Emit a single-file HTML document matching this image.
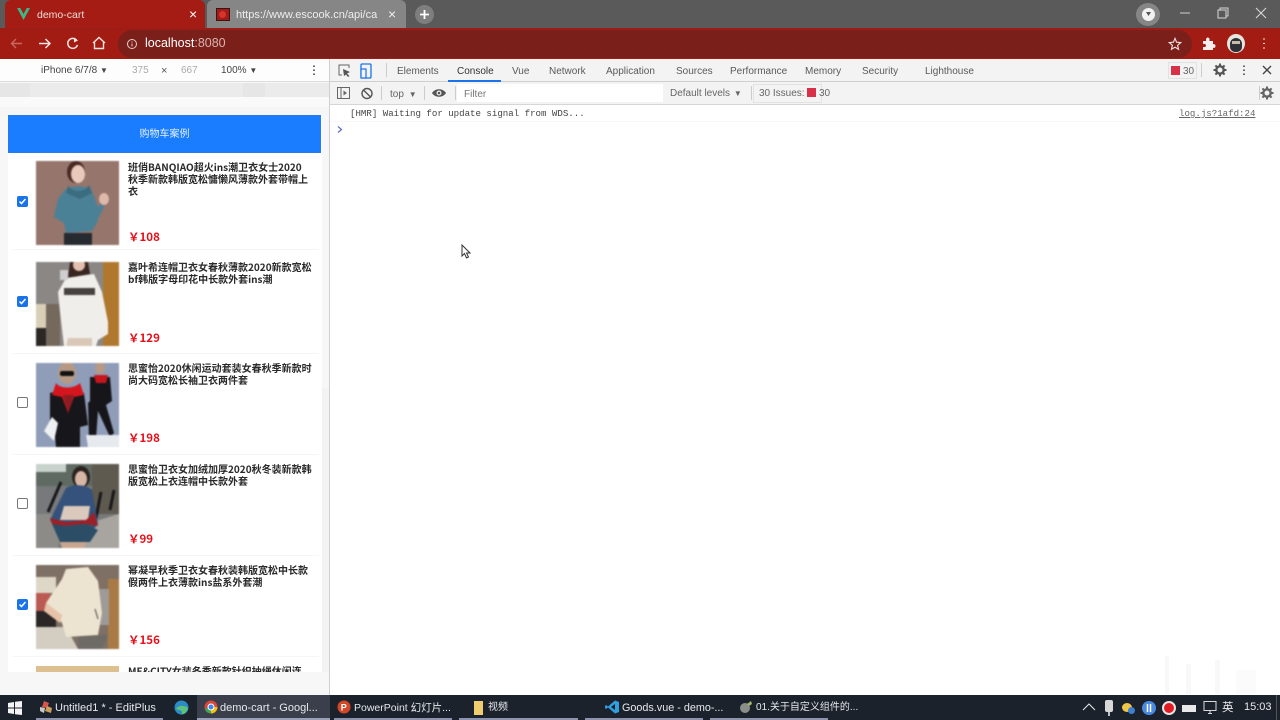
<!DOCTYPE html>
<html><head><meta charset="utf-8"><style>
*{box-sizing:border-box}
html,body{margin:0;padding:0;width:1280px;height:720px;overflow:hidden;background:#fff;font-family:"Liberation Sans","Noto Sans CJK SC",sans-serif}
.a{position:absolute}
.t{position:absolute;white-space:nowrap}
.dt{font-size:10px;color:#5a5a5a;top:65px;line-height:13px}
.title{position:absolute;left:128px;font-size:10px;line-height:12px;font-weight:700;color:#2a2a2a;font-family:"Noto Sans CJK SC","Liberation Sans",sans-serif;white-space:nowrap}
.price{position:absolute;left:128px;font-size:11.500px;line-height:13px;font-weight:700;color:#e60f18;font-family:"Noto Sans CJK SC","Liberation Sans",sans-serif}
.cb{position:absolute;left:17px;width:11px;height:11px;border-radius:2px}
.cb.on{background:#1a73e8}
.cb.off{background:#fff;border:1px solid #777}
.sep{position:absolute;left:13px;width:306px;height:1px;background:#f5f5f5}
.tb{position:absolute;top:701px;font-size:11px;line-height:14px;color:#e6e8ec;white-space:nowrap}
.ul{position:absolute;top:717.5px;height:2.5px;background:#8d93ad}
svg{position:absolute;overflow:hidden}
svg.img{filter:blur(.7px)}
</style></head><body>

<!-- title bar -->
<div class="a" style="left:0;top:0;width:1280px;height:29px;background:#5a5a5a"></div>
<div class="a" style="left:5px;top:0;width:200px;height:29px;background:#a41c13;border-radius:6px 6px 0 0"></div>
<div class="a" style="left:207px;top:0;width:199px;height:29px;background:#868686;border-radius:6px 6px 0 0"></div>
<svg style="left:17px;top:8px" width="13" height="12" viewBox="0 0 14 13"><path d="M0 0H3.500L7 6.500 10.500 0H14L7 13Z" fill="#3fb588"/></svg>
<div class="t" style="left:37px;top:8px;font-size:10.500px;line-height:14px;color:#f3dcd8">demo-cart</div>
<div class="t" style="left:189px;top:7px;font-size:14px;line-height:15px;color:#fff">×</div>
<div class="a" style="left:216px;top:8px;width:14px;height:13px;background:#a11c18;border:1px solid #3a1410"></div>
<div class="a" style="left:219px;top:11px;width:7px;height:7px;border-radius:50%;background:#d8342a"></div>
<div class="t" style="left:236px;top:8px;width:143px;overflow:hidden;font-size:11px;line-height:14px;color:#eee">https://www.escook.cn/api/ca</div>
<div class="t" style="left:388px;top:7px;font-size:14px;line-height:15px;color:#eee">×</div>
<div class="a" style="left:415px;top:5px;width:19px;height:19px;border-radius:50%;background:#7e7e7e"></div>
<svg style="left:419px;top:9px" width="11" height="11" viewBox="0 0 11 11"><path d="M5.500 1V10M1 5.500H10" stroke="#fff" stroke-width="1.800"/></svg>
<div class="a" style="left:1136px;top:3px;width:24px;height:23px;border-radius:50%;background:#868686"></div>
<div class="a" style="left:1142px;top:8px;width:13px;height:13px;border-radius:50%;background:#f2f2f2"></div>
<svg style="left:1145px;top:12px" width="7" height="5" viewBox="0 0 7 5"><path d="M1 0H6L3.500 4Z" fill="#555"/></svg>
<svg style="left:1176px;top:5px" width="100" height="18" viewBox="0 0 100 18"><path d="M4 8H14" stroke="#cfcfcf" stroke-width="1"/><path d="M42 5H50V13H42ZM44 5V3H52V11H50" fill="none" stroke="#d8d8d8" stroke-width="1"/><path d="M80 3L90 13M90 3L80 13" stroke="#dcdcdc" stroke-width="1"/></svg>

<!-- toolbar -->
<div class="a" style="left:0;top:28px;width:1280px;height:31px;background:#a21c13;border-top:2px solid #9c1d15"></div>
<div class="a" style="left:118px;top:30px;width:1074px;height:28px;background:#7a1f1a;border-radius:14px"></div>
<svg style="left:9px;top:35px" width="100" height="17" viewBox="0 0 100 17"><path d="M13 8.500H3M7 4L2.500 8.500 7 13" fill="none" stroke="#c7695f" stroke-width="1.400"/><path d="M30 8.500H41M36.500 4L41 8.500 36.500 13" fill="none" stroke="#f4e4e0" stroke-width="1.500"/><path d="M67.500 5A5 5 0 1 0 68.500 10" fill="none" stroke="#f4e4e0" stroke-width="1.500"/><path d="M65 2.500L69 5.500 65 7.500Z" fill="#f4e4e0"/><path d="M84 8L90 2.500 96 8M85.500 7V13.500H94.500V7" fill="none" stroke="#f4e4e0" stroke-width="1.400"/></svg>
<svg style="left:125px;top:37px" width="14" height="14" viewBox="0 0 14 14"><circle cx="7" cy="7" r="4.500" fill="none" stroke="#e5cdc9" stroke-width="1"/><path d="M7 4.500V5.500M7 6.500V9.500" stroke="#e5cdc9" stroke-width="1"/></svg>
<div class="t" style="left:145px;top:36px;font-size:12.500px;line-height:15px;color:#fff">localhost<span style="color:#d8b3ae">:8080</span></div>
<svg style="left:1168px;top:37px" width="14" height="14" viewBox="0 0 15 15"><path d="M7.500 1.500L9.200 5.600 13.600 6 10.300 8.900 11.300 13.200 7.500 10.900 3.700 13.200 4.700 8.900 1.400 6 5.800 5.600Z" fill="none" stroke="#efe0de" stroke-width="1.200"/></svg>
<svg style="left:1201px;top:36px" width="15" height="15" viewBox="0 0 15 15"><path d="M2 5H5.200C4.600 3 5.500 1.500 6.800 1.500S9 3 8.400 5H12V8.200C13.800 7.700 14.500 8.700 14.500 10S13.800 12.300 12 11.800V14H2V11C4 11.500 5 10.800 5 9.500S4 7.500 2 8Z" fill="#f6eeee"/></svg>
<div class="a" style="left:1227px;top:34px;width:18px;height:19px;border-radius:50%;background:#e6e6e0"></div>
<div class="a" style="left:1230px;top:38px;width:12px;height:14px;border-radius:6px 6px 5px 5px;background:#2f3035"></div>
<div class="a" style="left:1232px;top:41px;width:8px;height:3px;background:#c9b9a9"></div>
<svg style="left:1262px;top:36px" width="4" height="15" viewBox="0 0 4 15"><path d="M2 2.500V3.500M2 7V8M2 11.500V12.500" stroke="#f0e0dd" stroke-width="2"/></svg>

<!-- left pane -->
<div class="a" style="left:0;top:59px;width:330px;height:636px;background:#f7f7f7"></div>
<div class="a" style="left:0;top:59px;width:330px;height:23px;background:#fdfdfd;border-bottom:1px solid #dcdcdc"></div>
<div class="t" style="left:41px;top:64px;font-size:10px;line-height:13px;color:#444">iPhone 6/7/8 <span style="font-size:8px">▼</span></div>
<div class="t" style="left:132px;top:64px;font-size:10px;line-height:13px;color:#aaa">375</div>
<div class="t" style="left:161px;top:65px;font-size:11px;line-height:13px;color:#555">×</div>
<div class="t" style="left:181px;top:64px;font-size:10px;line-height:13px;color:#aaa">667</div>
<div class="t" style="left:221px;top:64px;font-size:10px;line-height:13px;color:#444">100% <span style="font-size:8px">▼</span></div>
<svg style="left:312px;top:64px" width="4" height="13" viewBox="0 0 4 13"><path d="M2 1.500V3M2 5.500V7M2 9.500V11" stroke="#555" stroke-width="1.800"/></svg>
<div class="a" style="left:0;top:83px;width:330px;height:14px;background:#ebebeb"></div>
<div class="a" style="left:0;top:83px;width:30px;height:14px;background:#e6e6e6"></div>
<div class="a" style="left:243px;top:83px;width:22px;height:14px;background:#e6e6e6"></div>
<div class="a" style="left:0;top:97px;width:330px;height:10px;background:#fafafa"></div>

<!-- card -->
<div class="a" style="left:8px;top:107px;width:314px;height:565px;background:#fff"></div>
<div class="a" style="left:0;top:107px;width:330px;height:9px;background:#f6f6f7"></div>
<div class="a" style="left:8px;top:115px;width:313px;height:38px;background:#1a7dff;border:1px solid #2a7ae8"></div>
<div class="t" style="left:8px;width:313px;text-align:center;top:127px;font-size:10px;line-height:15px;color:#e6f0ff">购物车案例</div>
<div class="a" style="left:322px;top:116px;width:8px;height:556px;background:#f3f3f3"></div>
<div class="a" style="left:322px;top:116px;width:8px;height:272px;background:#f7f7f7"></div>

<!-- Item 1 -->
<div class="cb on" style="top:196px"></div>
<svg style="left:17px;top:196px" width="11" height="11" viewBox="0 0 11 11"><path d="M2.500 5.500L4.500 7.500 8.500 3" fill="none" stroke="#fff" stroke-width="1.500"/></svg>
<svg class="img" style="left:36px;top:161px" width="83" height="84" viewBox="0 0 83 84"><rect width="83" height="84" fill="#95756c"/><ellipse cx="40" cy="11" rx="9" ry="11" fill="#4a2a24"/><ellipse cx="42" cy="13" rx="7" ry="9" fill="#e9c9bb"/><path d="M28 30C32 24 52 24 56 30L60 50 62 60 56 70 30 72 28 62 18 56 22 38Z" fill="#4a8197"/><path d="M56 30L62 46 66 42 68 46 62 58 56 50Z" fill="#4a8197"/><path d="M32 25C38 32 48 32 53 24L56 32 44 38 30 32Z" fill="#3b6c80"/><path d="M28 72H56V84H28Z" fill="#262a31"/><ellipse cx="68" cy="38" rx="5" ry="6" fill="#dcb9a8"/></svg>
<div class="title" style="top:161px">班俏BANQIAO超火ins潮卫衣女士2020<br>秋季新款韩版宽松慵懒风薄款外套带帽上<br>衣</div>
<div class="price" style="top:231px">￥108</div>
<div class="sep" style="top:249px"></div>

<!-- Item 2 -->
<div class="cb on" style="top:296px"></div>
<svg style="left:17px;top:296px" width="11" height="11" viewBox="0 0 11 11"><path d="M2.500 5.500L4.500 7.500 8.500 3" fill="none" stroke="#fff" stroke-width="1.500"/></svg>
<svg class="img" style="left:36px;top:262px" width="83" height="84" viewBox="0 0 83 84"><rect width="83" height="84" fill="#8a8784"/><rect x="67" width="16" height="84" fill="#b0782f"/><rect y="42" width="24" height="42" fill="#75685c"/><rect y="42" width="10" height="24" fill="#d8cfb6"/><rect y="66" width="10" height="18" fill="#2a2725"/><path d="M34 0H52L54 12 42 14 36 24 32 16Z" fill="#3a2621"/><ellipse cx="43" cy="3" rx="6" ry="6" fill="#e2bfae"/><path d="M30 16L58 12 66 30 72 60 72 72 62 78 60 84H28L24 50 22 30Z" fill="#f0eeea"/><rect x="24" y="8" width="8" height="10" fill="#cfcfcf"/><rect x="28" y="26" width="31" height="7" fill="#45423f"/><path d="M30 84H56V76H32Z" fill="#d9c8b7"/></svg>
<div class="title" style="top:261px">嘉叶希连帽卫衣女春秋薄款2020新款宽松<br>bf韩版字母印花中长款外套ins潮</div>
<div class="price" style="top:332px">￥129</div>
<div class="sep" style="top:353px"></div>

<!-- Item 3 -->
<div class="cb off" style="top:397px"></div>
<svg class="img" style="left:36px;top:363px" width="83" height="84" viewBox="0 0 83 84"><rect width="83" height="84" fill="#8f9db8"/><ellipse cx="31" cy="10" rx="9" ry="11" fill="#b69a86"/><rect x="24" y="8" width="14" height="5" rx="2" fill="#111"/><path d="M14 30C20 28 42 28 48 30L52 62 44 64 44 84H20L18 62 14 62Z" fill="#17161a"/><path d="M20 20C24 26 38 26 44 20L48 32 38 34 32 50 26 34 16 32Z" fill="#d5161e"/><path d="M27 32H38L32 50Z" fill="#8e1c22"/><path d="M16 54L8 68 18 78 22 60Z" fill="#eef0f2"/><ellipse cx="64" cy="5" rx="5" ry="6" fill="#b69a86"/><path d="M54 14H74L76 38 70 42 78 70 74 74 62 48 60 76 53 76 52 40 54 38Z" fill="#16151a"/><path d="M58 12H72L70 20 60 20Z" fill="#c8161d"/><path d="M50 72H83V84H52Z" fill="#e6e9ee"/></svg>
<div class="title" style="top:362px">思蜜怡2020休闲运动套装女春秋季新款时<br>尚大码宽松长袖卫衣两件套</div>
<div class="price" style="top:432px">￥198</div>
<div class="sep" style="top:454px"></div>

<!-- Item 4 -->
<div class="cb off" style="top:498px"></div>
<svg class="img" style="left:36px;top:464px" width="83" height="84" viewBox="0 0 83 84"><rect width="83" height="84" fill="#77797a"/><rect width="83" height="22" fill="#5f6a62"/><rect width="30" height="8" fill="#c8d2cc"/><rect x="56" width="27" height="50" fill="#5f5a50"/><path d="M0 50H30L22 84H0Z" fill="#8d8b88"/><path d="M50 60L83 50V84H40Z" fill="#a8a5a0"/><path d="M25 18L12 48M65 28L60 54M78 26L74 46" stroke="#17181a" stroke-width="3"/><ellipse cx="45" cy="13" rx="9" ry="11" fill="#2b2320"/><ellipse cx="45" cy="15" rx="6" ry="8" fill="#d7b6a6"/><path d="M30 24C36 20 50 20 56 26L62 60 50 74H26L14 56Z" fill="#34527b"/><path d="M28 42H54L52 56H24Z" fill="#dcc9bd"/><path d="M14 54L30 58 50 56 58 48 62 62 48 60 28 62 16 60Z" fill="#9c2028"/><path d="M16 60L30 62 50 60 62 66 54 78 24 78Z" fill="#2b4d66"/><path d="M24 78H50L48 84H26Z" fill="#c8a68f"/></svg>
<div class="title" style="top:463px">思蜜怡卫衣女加绒加厚2020秋冬装新款韩<br>版宽松上衣连帽中长款外套</div>
<div class="price" style="top:533px">￥99</div>
<div class="sep" style="top:555px"></div>

<!-- Item 5 -->
<div class="cb on" style="top:599px"></div>
<svg style="left:17px;top:599px" width="11" height="11" viewBox="0 0 11 11"><path d="M2.500 5.500L4.500 7.500 8.500 3" fill="none" stroke="#fff" stroke-width="1.500"/></svg>
<svg class="img" style="left:36px;top:565px" width="83" height="84" viewBox="0 0 83 84"><rect width="83" height="84" fill="#7f7065"/><rect x="0" y="12" width="20" height="16" fill="#ded7c8"/><rect x="0" y="28" width="14" height="18" fill="#bb5a52"/><rect x="0" y="46" width="20" height="16" fill="#2a2726"/><rect x="72" y="14" width="11" height="70" fill="#a97a46"/><rect x="60" y="24" width="13" height="36" fill="#9e9a96"/><path d="M0 62H30L42 84H0Z" fill="#d3cdc2"/><path d="M42 70H72L66 84H42Z" fill="#6e6a66"/><path d="M30 4L52 2 62 16 66 48 62 70 30 72 26 58 10 38 26 14Z" fill="#ece3d0"/><path d="M10 38L26 50 24 58 8 46Z" fill="#e6c3a8"/><path d="M59 44L62 54" stroke="#444" stroke-width="1"/></svg>
<div class="title" style="top:564px">幂凝早秋季卫衣女春秋装韩版宽松中长款<br>假两件上衣薄款ins盐系外套潮</div>
<div class="price" style="top:634px">￥156</div>
<div class="sep" style="top:656px"></div>

<!-- Item 6 clipped -->
<div class="a" style="left:8px;top:664px;width:314px;height:8px;overflow:hidden">
  <div class="a" style="left:28px;top:2px;width:83px;height:6px;background:#dcc08f"></div>
  <div class="title" style="left:120px;top:1px">ME&amp;CITY女装冬季新款针织抽绳休闲连</div>
</div>
<div class="a" style="left:0;top:672px;width:330px;height:23px;background:#f7f7f7"></div>

<!-- divider -->
<div class="a" style="left:329px;top:59px;width:1px;height:636px;background:#d0d0d0"></div>

<!-- devtools tabs -->
<div class="a" style="left:330px;top:59px;width:950px;height:23px;background:#f3f3f3;border-bottom:1px solid #cfcfcf"></div>
<svg style="left:337px;top:63px" width="38" height="16" viewBox="0 0 38 16"><path d="M5 12H2V2H12V5" fill="none" stroke="#666" stroke-width="1"/><path d="M6 6L13 9 10 10.500 12.500 13 11 14 9 11.500 7 13Z" fill="#555"/><rect x="24" y="1" width="10" height="14" rx="1" fill="none" stroke="#1a73e8" stroke-width="1.300"/><rect x="24" y="6" width="5" height="9" fill="#f3f3f3" stroke="#1a73e8" stroke-width="1.200"/></svg>
<div class="a" style="left:386px;top:63px;width:1px;height:14px;background:#ccc"></div>
<div class="t dt" style="left:397px">Elements</div>
<div class="t dt" style="left:457px;color:#333">Console</div>
<div class="a" style="left:448px;top:80px;width:53px;height:2px;background:#1a73e8"></div>
<div class="t dt" style="left:512px">Vue</div>
<div class="t dt" style="left:549px">Network</div>
<div class="t dt" style="left:606px">Application</div>
<div class="t dt" style="left:676px">Sources</div>
<div class="t dt" style="left:730px">Performance</div>
<div class="t dt" style="left:805px">Memory</div>
<div class="t dt" style="left:862px">Security</div>
<div class="t dt" style="left:925px">Lighthouse</div>
<div class="a" style="left:1168px;top:62px;width:29px;height:17px;border:1px solid #e2e2e2"></div>
<div class="a" style="left:1171px;top:66px;width:9px;height:9px;background:#d9304a"></div>
<div class="t dt" style="left:1183px;color:#666">30</div>
<div class="a" style="left:1201px;top:63px;width:1px;height:14px;background:#ccc"></div>
<svg style="left:1213px;top:63px" width="14" height="14" viewBox="0 0 14 14"><circle cx="7" cy="7" r="3.700" fill="none" stroke="#555" stroke-width="2.400"/><path d="M7 .5V3M7 11V13.500M.5 7H3M11 7H13.500M2.400 2.400L4 4M10 10L11.600 11.600M2.400 11.600L4 10M10 4L11.600 2.400" stroke="#555" stroke-width="2"/></svg>
<svg style="left:1242px;top:64px" width="4" height="13" viewBox="0 0 4 13"><path d="M2 1.500V3M2 5.500V7M2 9.500V11" stroke="#555" stroke-width="1.800"/></svg>
<svg style="left:1262px;top:65px" width="10" height="10" viewBox="0 0 10 10"><path d="M1 1L9 9M9 1L1 9" stroke="#444" stroke-width="1.400"/></svg>

<!-- console toolbar -->
<div class="a" style="left:330px;top:82px;width:950px;height:23px;background:#f3f3f3;border-bottom:1px solid #d6d6d6"></div>
<svg style="left:336px;top:86px" width="40" height="15" viewBox="0 0 40 15"><rect x="1.500" y="1.500" width="12" height="11" fill="none" stroke="#666"/><path d="M5 1.500V12.500" stroke="#666"/><path d="M7.500 4.500L11 7 7.500 9.500Z" fill="#666"/><circle cx="31" cy="7.500" r="5" fill="none" stroke="#555" stroke-width="1.400"/><path d="M27.500 4L34.500 11" stroke="#555" stroke-width="1.400"/></svg>
<div class="a" style="left:381px;top:86px;width:1px;height:14px;background:#ccc"></div>
<div class="t" style="left:390px;top:88px;font-size:10px;line-height:13px;color:#666">top <span style="font-size:8px;margin-left:2px">▼</span></div>
<div class="a" style="left:424px;top:86px;width:1px;height:14px;background:#ccc"></div>
<svg style="left:431px;top:87px" width="16" height="12" viewBox="0 0 16 12"><path d="M1 6C4 1 12 1 15 6 12 11 4 11 1 6Z" fill="#555"/><circle cx="8" cy="6" r="2.500" fill="#f3f3f3"/><circle cx="8" cy="6" r="1.300" fill="#555"/></svg>
<div class="a" style="left:455px;top:86px;width:1px;height:14px;background:#ccc"></div>
<div class="a" style="left:457px;top:84px;width:206px;height:18px;background:#fff"></div>
<div class="t" style="left:464px;top:88px;font-size:10px;line-height:13px;color:#777">Filter</div>
<div class="t" style="left:670px;top:87px;font-size:10px;line-height:13px;color:#666">Default levels <span style="font-size:8px;margin-left:1px">▼</span></div>
<div class="a" style="left:751px;top:86px;width:1px;height:14px;background:#ccc"></div>
<div class="a" style="left:753px;top:84px;width:69px;height:19px;border:1px solid #e2e2e2"></div>
<div class="t" style="left:759px;top:87px;font-size:10px;line-height:13px;color:#666">30 Issues:</div>
<div class="a" style="left:807px;top:88px;width:9px;height:9px;background:#d9304a"></div>
<div class="t" style="left:819px;top:87px;font-size:10px;line-height:13px;color:#666">30</div>
<div class="a" style="left:1259px;top:86px;width:1px;height:14px;background:#ccc"></div>
<svg style="left:1260px;top:86px" width="14" height="14" viewBox="0 0 14 14"><circle cx="7" cy="7" r="3.700" fill="none" stroke="#666" stroke-width="2.400"/><path d="M7 .5V3M7 11V13.500M.5 7H3M11 7H13.500M2.400 2.400L4 4M10 10L11.600 11.600M2.400 11.600L4 10M10 4L11.600 2.400" stroke="#666" stroke-width="2"/></svg>

<!-- console -->
<div class="t" style="left:350px;top:108px;font-family:'Liberation Mono',monospace;font-size:9.100px;line-height:12px;color:#444">[HMR] Waiting for update signal from WDS...</div>
<div class="t" style="left:1179px;top:108px;font-family:'Liberation Mono',monospace;font-size:9.100px;line-height:12px;color:#666;text-decoration:underline">log.js?1afd:24</div>
<div class="a" style="left:330px;top:121px;width:950px;height:1px;background:#f8f8f8"></div>
<svg style="left:337px;top:126px" width="6" height="7" viewBox="0 0 6 7"><path d="M1 .5L4.500 3.500 1 6.500" fill="none" stroke="#5c6bc0" stroke-width="1.200"/></svg>

<!-- cursor -->
<svg style="left:461px;top:244px" width="10" height="15" viewBox="0 0 10 15"><path d="M1 1V12L3.500 9.500 5.500 14 7.500 13 5.500 9H9Z" fill="#fff" stroke="#333" stroke-width="1"/></svg>

<!-- watermark -->
<div class="a" style="left:1165px;top:656px;width:4px;height:38px;background:#f8f8f8"></div>
<div class="a" style="left:1186px;top:664px;width:5px;height:30px;background:#f8f8f8"></div>
<div class="a" style="left:1215px;top:660px;width:5px;height:34px;background:#f8f8f8"></div>
<div class="a" style="left:1236px;top:670px;width:20px;height:24px;background:#fbfbfb"></div>

<!-- taskbar -->
<div class="a" style="left:0;top:695px;width:1280px;height:25px;background:#1c222c"></div>
<div class="a" style="left:197px;top:695px;width:133px;height:25px;background:#3a3f4b"></div>
<svg style="left:8px;top:701px" width="14" height="14" viewBox="0 0 14 14"><path d="M0 2L6 1V6.500H0ZM7 .800L14 0V6.500H7ZM0 7.500H6V13L0 12ZM7 7.500H14V14L7 13.200Z" fill="#f4f4f4"/></svg>
<svg style="left:39px;top:700px" width="14" height="14" viewBox="0 0 14 14"><path d="M5 1L10 3 8 8 3 7Z" fill="#d9544d"/><path d="M8 6L13 8 12 13 6 11Z" fill="#caa05c"/><path d="M1 7L6 8 5 13 1 11Z" fill="#c8c8c8"/></svg>
<div class="tb" style="left:55px">Untitled1 * - EditPlus</div>
<div class="ul" style="left:36px;width:127px"></div>
<svg style="left:174px;top:700px" width="15" height="15" viewBox="0 0 15 15"><circle cx="7.500" cy="7.500" r="7" fill="#2a8bc6"/><path d="M2 9C4 5 11 5 14 8 13 12 10 14.500 7 14.500 9 13 8 10 5 10Z" fill="#5ec27b"/></svg>
<svg style="left:204px;top:700px" width="14" height="14" viewBox="0 0 14 14"><circle cx="7" cy="7" r="6.500" fill="#d9483b"/><path d="M7 7L.8 9A6.500 6.500 0 0 0 7 13.500Z" fill="#3aa757"/><path d="M7 7V13.500A6.500 6.500 0 0 0 13.500 7Z" fill="#f4c20d"/><circle cx="7" cy="7" r="3" fill="#4285f4" stroke="#fff"/></svg>
<div class="tb" style="left:220px">demo-cart - Googl...</div>
<div class="ul" style="left:197px;width:133px;background:#9aa0b8"></div>
<svg style="left:337px;top:700px" width="14" height="14" viewBox="0 0 14 14"><circle cx="7" cy="7" r="6.500" fill="#d24726"/><text x="3.800" y="10.500" font-size="9" font-weight="700" fill="#fff" font-family="Liberation Sans">P</text></svg>
<div class="tb" style="left:354px;font-size:10.500px">PowerPoint 幻灯片...</div>
<div class="ul" style="left:334px;width:118px"></div>
<div class="a" style="left:474px;top:701px;width:9px;height:14px;background:#f0cd6e"></div>
<div class="tb" style="left:488px;font-size:10px">视频</div>
<div class="ul" style="left:459px;width:119px"></div>
<svg style="left:605px;top:700px" width="14" height="14" viewBox="0 0 14 14"><path d="M10 .5L14 2V12L10 13.500 3 7.500 1 9 0 8V6L1 5 3 6.500Z" fill="#2f9fe0"/><path d="M10 4L6 7 10 10Z" fill="#1c222c"/></svg>
<div class="tb" style="left:622px;font-size:10.800px">Goods.vue - demo-...</div>
<div class="ul" style="left:585px;width:118px"></div>
<svg style="left:739px;top:700px" width="14" height="14" viewBox="0 0 14 14"><ellipse cx="6" cy="8" rx="5" ry="5" fill="#8a8f8a"/><path d="M8 4L12 1 13 4 10 6Z" fill="#a6b36a"/></svg>
<div class="tb" style="left:756px;font-size:10px">01.关于自定义组件的...</div>
<div class="ul" style="left:710px;width:118px"></div>
<svg style="left:1082px;top:702px" width="14" height="10" viewBox="0 0 14 10"><path d="M1 8L7 2 13 8" fill="none" stroke="#e8e8e8" stroke-width="1"/></svg>
<div class="a" style="left:1105px;top:700px;width:8px;height:12px;border-radius:2px;background:#d8d8d8"></div>
<div class="a" style="left:1108px;top:712px;width:2px;height:4px;background:#c0c0c0"></div>
<div class="a" style="left:1122px;top:703px;width:10px;height:9px;border-radius:50%;background:#f0c64a"></div>
<div class="a" style="left:1128px;top:707px;width:7px;height:7px;border-radius:50%;background:#3d7fd0"></div>
<div class="a" style="left:1142px;top:701px;width:14px;height:14px;border-radius:50%;background:#4a8ae0"></div>
<svg style="left:1146px;top:704px" width="6" height="8" viewBox="0 0 6 8"><path d="M1.500 0V8M4.500 0V8" stroke="#fff" stroke-width="1.500"/></svg>
<div class="a" style="left:1162px;top:701px;width:14px;height:14px;border-radius:50%;background:#e01b24;border:2px solid #e6e6e6"></div>
<div class="a" style="left:1182px;top:705px;width:14px;height:7px;background:#e8e8e8"></div>
<svg style="left:1202px;top:700px" width="16" height="15" viewBox="0 0 16 15"><path d="M2 1.500H14V10.500H2ZM6 13.500H10M8 10.500V13.500" fill="none" stroke="#d8d8d8"/></svg>
<div class="t" style="left:1222px;top:700px;font-size:11.500px;line-height:15px;color:#eee;font-family:'Noto Sans CJK SC',sans-serif">英</div>
<div class="t" style="left:1244px;top:700px;font-size:11px;line-height:15px;color:#e8e8e8">15:03</div>
<div class="a" style="left:1276px;top:695px;width:1px;height:25px;background:#555"></div>
</body></html>
